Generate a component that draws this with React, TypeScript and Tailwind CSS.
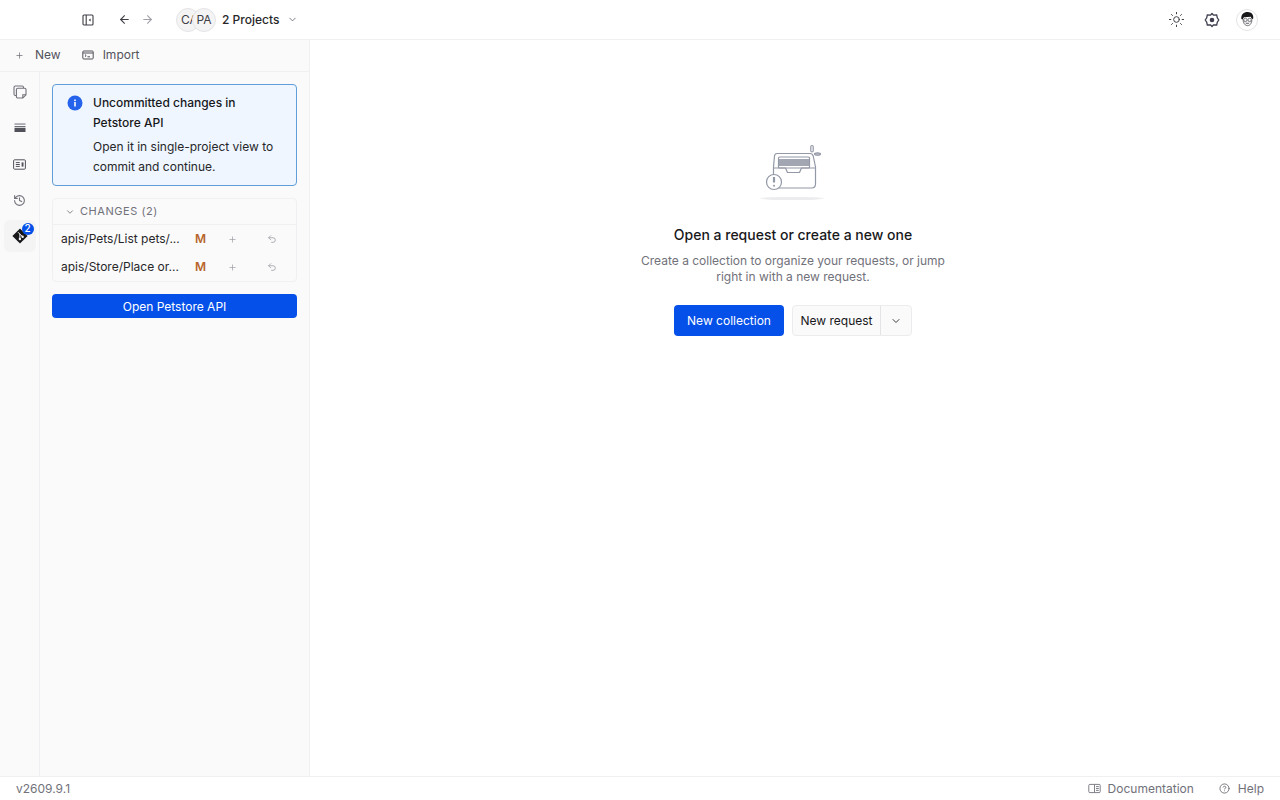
import React from "react";
import { ArrowLeft, ArrowRight, ChevronDown, Plus, Undo2, History, CircleHelp, Sun } from "lucide-react";

function PanelIcon() {
  return (
    <svg width="12" height="12" viewBox="0 0 12 12" fill="none" stroke="#3f3f46" strokeWidth="1.100">
      <rect x="1" y="1" width="10" height="10" rx="1" />
      <path d="M4.200 1v10" />
      <path d="M8.600 4.400 6.600 6l2 1.600z" fill="#3f3f46" stroke="none" />
    </svg>
  );
}

function ImportIcon() {
  return (
    <svg width="12" height="12" viewBox="0 0 12 12" fill="none" stroke="#52525b" strokeWidth="1">
      <rect x="0.800" y="2" width="10.400" height="8" rx="1" />
      <path d="M0.800 4h10.400" />
      <path d="m3 5.600 1.200 1-1.200 1M5.500 7.800h2.500" />
    </svg>
  );
}

function CopyIcon() {
  return (
    <svg width="14" height="14" viewBox="0 0 14 14" fill="none" stroke="#71717a" strokeWidth="1.100">
      <path d="M3 10.500H2.400A1.400 1.400 0 0 1 1 9.100V2.400A1.400 1.400 0 0 1 2.400 1h6.700a1.400 1.400 0 0 1 1.400 1.400V3" />
      <path d="M4.800 3.200h6.800a1.400 1.400 0 0 1 1.400 1.400v5.200L9.800 13H4.800a1.400 1.400 0 0 1-1.400-1.400V4.600a1.400 1.400 0 0 1 1.400-1.400z" />
      <path d="M9.800 13v-3.200H13" />
    </svg>
  );
}

function StackIcon() {
  return (
    <svg width="12" height="10" viewBox="0 0 12 10">
      <rect x="0.500" y="0.400" width="11" height="1.300" fill="#8b8b94" />
      <rect x="0.500" y="3" width="11" height="1.300" fill="#71717a" />
      <rect x="0.500" y="5" width="11" height="4" fill="#52525b" />
    </svg>
  );
}

function EnvIcon() {
  return (
    <svg width="13" height="11" viewBox="0 0 13 11" fill="none" stroke="#52525b" strokeWidth="1">
      <rect x="0.600" y="0.800" width="11.800" height="9.400" rx="1" />
      <path d="M2.800 3.600h4M2.800 5.500h4M2.800 7.400h4" />
      <rect x="8.600" y="3.400" width="1.900" height="4.200" fill="#52525b" stroke="none" />
    </svg>
  );
}

function GitIcon() {
  return (
    <svg width="16" height="16" viewBox="0 0 16 16">
      <path d="M8 .4 15.600 8 8 15.600.4 8z" fill="#18181b" />
      <path d="M6 4.200 11 9.200M7.900 6v5" stroke="#f4f4f5" strokeWidth="1" fill="none" />
      <circle cx="7.900" cy="11" r="1.200" fill="#f4f4f5" />
      <circle cx="10.600" cy="8.800" r="1.200" fill="#f4f4f5" />
    </svg>
  );
}

function GearIcon() {
  return (
    <svg width="16" height="16" viewBox="0 0 16 16" fill="none">
      <path d="M8 1.500 9.600 3.200 12.700 3 13.300 5.800 14.800 8 13.300 10.200 12.700 13 9.600 12.800 8 14.500 6.400 12.800 3.300 13 2.700 10.200 1.200 8 2.700 5.800 3.300 3 6.400 3.200z" stroke="#3f3f50" strokeWidth="1.300" strokeLinejoin="round" />
      <circle cx="8" cy="8" r="2.300" fill="#3f3f50" />
    </svg>
  );
}

function Avatar() {
  return (
    <div className="flex h-[22px] w-[22px] items-center justify-center rounded-full border border-[#e4e4e7] bg-white">
      <svg width="17" height="17" viewBox="0 0 16 16">
        <path d="M2.200 7.600C1.600 3 5 .8 8.400 1c3.200.2 5.600 2.400 5 6l-1.200.8-1.200-2.400-6.400.5L3.400 8z" fill="#18181b" />
        <path d="M3.800 7.800c.2 3.800 1.800 6 4.400 6 2.400 0 3.800-2.400 4-5.800" fill="#f4f4f5" stroke="#52525b" strokeWidth=".7" />
        <circle cx="6" cy="8.400" r="1.600" fill="none" stroke="#52525b" strokeWidth=".7" />
        <circle cx="10" cy="8.400" r="1.600" fill="none" stroke="#52525b" strokeWidth=".7" />
        <path d="M6.400 11.600h3" stroke="#52525b" strokeWidth=".8" />
      </svg>
    </div>
  );
}

function BookIcon() {
  return (
    <svg width="13" height="11" viewBox="0 0 13 11" fill="none" stroke="#71717a" strokeWidth="0.900">
      <path d="M6.500 1.400H1.800a1 1 0 0 0-1 1v6.200a1 1 0 0 0 1 1h4.700zM6.500 1.400h4.700a1 1 0 0 1 1 1v6.200a1 1 0 0 1-1 1H6.500" />
      <path d="M8 3.600h2.800M8 5.500h2.800M8 7.400h2.800" />
    </svg>
  );
}

function EmptyArt() {
  return (
    <svg width="70" height="58" viewBox="0 0 70 58" fill="none" stroke="#9398a6" strokeWidth="1.200" strokeLinejoin="round">
      <ellipse cx="34" cy="54.500" rx="32" ry="1.600" fill="#ececee" stroke="none" />
      <path d="M19 9.500h33c1.800 0 2.800 1 3.200 2.500l2.300 11v17c0 2.500-1.500 4-4 4H19.500c-2.500 0-4-1.500-4-4V23l1-11c.2-1.500 1-2.500 2.500-2.500z" fill="#fff" />
      <rect x="20.500" y="13" width="31" height="11" rx="1" fill="#fff" />
      <rect x="21" y="15" width="30" height="7" fill="#a2a6b2" stroke="none" />
      <path d="M15.500 24h12l2 4.500h12l2-4.500h14" />
      <circle cx="16" cy="38" r="7.500" fill="#fff" />
      <path d="M16 33v5.500" strokeWidth="2.200" />
      <circle cx="16" cy="41.700" r="1" fill="#9398a6" stroke="none" />
      <rect x="52.800" y="1.500" width="2.400" height="6.500" rx="1.200" />
      <ellipse cx="59.500" cy="10" rx="3" ry="1.200" fill="#c4c6ce" />
    </svg>
  );
}

function ChangeRow({ name }: { name: string }) {
  return (
    <div className="flex h-7 items-center pl-2">
      <span className="w-[120px] shrink-0 overflow-hidden whitespace-nowrap text-xs text-[#27272a]">{name}</span>
      <span className="ml-[14px] w-[14px] shrink-0 text-xs font-semibold text-[#b8652c]">M</span>
      <span className="ml-[17px] flex w-3 justify-center">
        <Plus size={9} color="#a1a1aa" />
      </span>
      <span className="ml-[28px] flex w-3 justify-center">
        <Undo2 size={10} color="#a1a1aa" />
      </span>
    </div>
  );
}

export default function App() {
  return (
    <div className="flex h-[800px] w-[1280px] flex-col overflow-hidden bg-white text-xs text-[#27272a] [font-family:Inter,'Liberation_Sans',sans-serif]">
      <header className="flex h-10 shrink-0 items-center border-b border-[#f0f0f2] pl-[82px] pr-[22px]">
        <PanelIcon />
        <ArrowLeft size={13} color="#3f3f46" className="ml-[24px]" />
        <ArrowRight size={13} color="#a1a1aa" className="ml-[10px]" />
        <div className="ml-[22px] flex items-center">
          <span className="flex h-6 w-6 items-center justify-start overflow-hidden rounded-full border border-[#e4e4e7] bg-[#f4f4f5] pl-[4px] text-xs text-[#3f3f46]">CA</span>
          <span className="-ml-[8px] flex h-6 w-6 items-center justify-center rounded-full border border-[#e4e4e7] bg-[#f4f4f5] text-xs text-[#3f3f46]">PA</span>
        </div>
        <span className="ml-[6px] text-xs font-medium text-[#27272a]">2 Projects</span>
        <ChevronDown size={11} color="#71717a" className="ml-[8px]" />
        <div className="ml-auto flex items-center">
          <Sun size={17} color="#3f3f46" strokeWidth={1.400} />
          <span className="ml-[19px]"><GearIcon /></span>
          <span className="ml-[16px]"><Avatar /></span>
        </div>
      </header>

      <div className="flex min-h-0 flex-1">
        <aside className="flex w-[310px] shrink-0 flex-col border-r border-[#f0f0f2] bg-[#fafafa]">
          <div className="flex h-8 shrink-0 items-center border-b border-[#f0f0f2] pb-[1px] pl-[15px] text-[#52525b]">
            <Plus size={9} color="#71717a" />
            <span className="ml-[11px]">New</span>
            <span className="ml-[21px]"><ImportIcon /></span>
            <span className="ml-[9px]">Import</span>
          </div>
          <div className="flex min-h-0 flex-1">
            <nav className="flex w-10 shrink-0 flex-col items-center border-r border-[#f0f0f2] pt-[2px]">
              <div className="flex h-9 w-8 items-center justify-center"><CopyIcon /></div>
              <div className="flex h-9 w-8 items-center justify-center"><StackIcon /></div>
              <div className="flex h-9 w-8 items-center justify-center"><EnvIcon /></div>
              <div className="flex h-9 w-8 items-center justify-center"><History size={13} color="#71717a" /></div>
              <div className="relative mt-[2px] flex h-8 w-8 items-center justify-center rounded-md bg-[#f4f4f5]">
                <GitIcon />
                <span className="absolute right-[2px] top-[3px] flex h-3 w-3 items-center justify-center rounded-full bg-[#0550e8] text-[10px] font-medium text-white">2</span>
              </div>
            </nav>
            <div className="flex min-w-0 flex-1 flex-col px-3 pt-3">
              <div className="flex h-[102px] gap-[10px] rounded-[4px] border border-[#5f9ed8] bg-[#eff6ff] pl-[14px] pr-4 pt-2">
                <svg width="16" height="16" viewBox="0 0 16 16" className="mt-[2px] shrink-0">
                  <circle cx="8" cy="8" r="7.500" fill="#2563eb" />
                  <rect x="7.200" y="7" width="1.600" height="4.500" fill="#fff" />
                  <rect x="7.200" y="4.500" width="1.600" height="1.600" fill="#fff" />
                </svg>
                <div className="leading-5">
                  <div className="font-medium text-[#18181b]">Uncommitted changes in Petstore API</div>
                  <div className="mt-1 text-[#27272a]">Open it in single-project view to commit and continue.</div>
                </div>
              </div>
              <div className="mt-3 h-[84px] rounded-[4px] border border-[#f0f0f2]">
                <div className="flex h-[26px] items-center border-b border-[#f0f0f2] pl-3 text-[11px] tracking-[0.05em] text-[#71717a]">
                  <ChevronDown size={10} color="#71717a" />
                  <span className="ml-[5px]">CHANGES (2)</span>
                </div>
                <ChangeRow name="apis/Pets/List pets/..." />
                <ChangeRow name="apis/Store/Place or..." />
              </div>
              <button className="mt-3 flex h-6 items-center justify-center rounded-[4px] bg-[#0550e8] pt-[1px] text-white">Open Petstore API</button>
            </div>
          </div>
        </aside>

        <main className="flex min-w-0 flex-1 flex-col items-center pr-1 pt-[104px]">
          <EmptyArt />
          <h1 className="mt-[23px] text-sm font-medium leading-5 text-[#18181b]">Open a request or create a new one</h1>
          <p className="mt-[8px] w-[320px] text-center text-xs leading-4 text-[#71717a]">Create a collection to organize your requests, or jump right in with a new request.</p>
          <div className="mt-5 flex items-center gap-2">
            <button className="h-[31px] w-[110px] rounded-[4px] bg-[#0550e8] text-white">New collection</button>
            <div className="flex h-[31px] w-[120px] items-center rounded-[4px] border border-[#ececee] bg-[#fafafa]">
              <span className="flex h-full w-[88px] items-center justify-center border-r border-[#e4e4e7] text-[#18181b]">New request</span>
              <span className="flex flex-1 items-center justify-center"><ChevronDown size={12} color="#3f3f46" /></span>
            </div>
          </div>
        </main>
      </div>

      <footer className="flex h-6 shrink-0 items-center border-t border-[#f0f0f2] pl-4 pr-[16px] text-xs text-[#71717a]">
        <span>v2609.9.1</span>
        <div className="ml-auto flex items-center">
          <BookIcon />
          <span className="ml-[7px]">Documentation</span>
          <CircleHelp size={11} color="#71717a" className="ml-[25px]" />
          <span className="ml-[8px]">Help</span>
        </div>
      </footer>
    </div>
  );
}
